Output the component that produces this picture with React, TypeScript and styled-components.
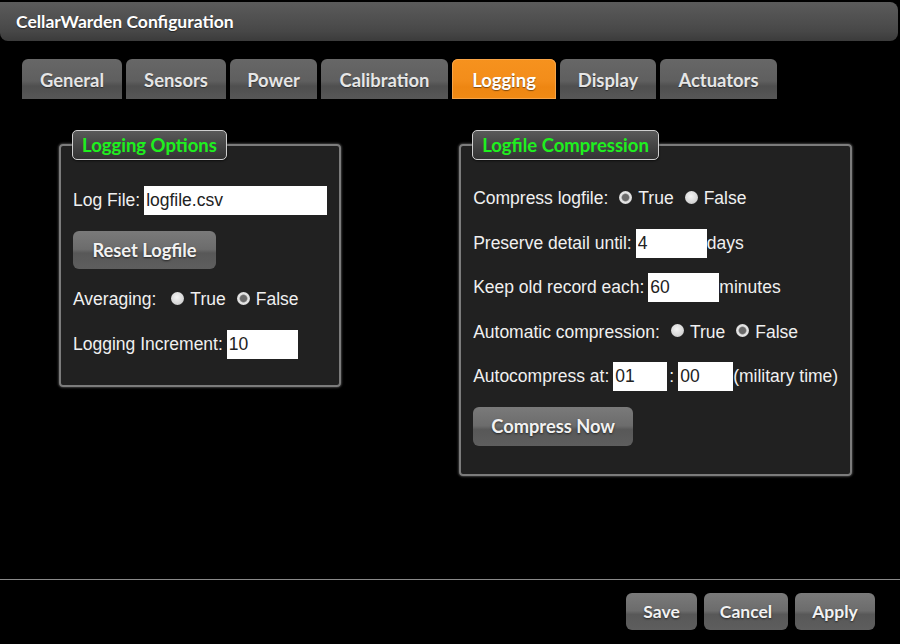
import styled, { createGlobalStyle } from 'styled-components';

const GlobalStyle = createGlobalStyle`
  html, body {
    margin: 0;
    padding: 0;
    background: #000;
  }
  body {
    font-family: "Liberation Sans", Arial, sans-serif;
    color: #f0f0f0;
  }
`;

const Page = styled.div`
  display: flex;
  flex-direction: column;
  height: 644px;
  width: 900px;
  overflow: hidden;
`;

const TitleBar = styled.div`
  margin: 2px 2px 0 0;
  height: 39px;
  display: flex;
  align-items: center;
  padding-left: 16px;
  border-radius: 0 8px 8px 8px;
  background: linear-gradient(#5b5b5b 0%, #4d4d4d 55%, #474747 75%, #3b3b3b 100%);
  font-family: Lato, "Open Sans", sans-serif;
  font-weight: 700;
  font-size: 17.5px;
  color: #fff;
  text-shadow: 0 1px 1px rgba(0, 0, 0, 0.5);
`;

const TabRow = styled.div`
  display: flex;
  gap: 4px;
  margin-top: 18px;
  padding-left: 22px;
  height: 40px;
`;

const Tab = styled.div<{ $w: number; $active?: boolean }>`
  width: ${(p) => p.$w}px;
  display: flex;
  align-items: center;
  justify-content: center;
  padding-top: 2px;
  box-sizing: border-box;
  border-radius: 6px 6px 0 0;
  font-family: Lato, "Open Sans", sans-serif;
  font-weight: 700;
  font-size: 18.4px;
  color: ${(p) => (p.$active ? '#fff' : '#e6e6e6')};
  text-shadow: 0 1px 1px rgba(0, 0, 0, 0.45);
  background: ${(p) =>
    p.$active
      ? 'linear-gradient(#f6921e 0%, #f38d1a 55%, #ee8612 70%, #f08a14 100%)'
      : 'linear-gradient(#676767 0%, #5f5f5f 55%, #4f4f4f 68%, #575757 100%)'};
  box-shadow: ${(p) => (p.$active ? 'inset 0 0 0 1px #f7a447' : 'none')};
`;

const Content = styled.div`
  flex: 1;
  display: flex;
  align-items: flex-start;
  gap: 118px;
  padding: 31px 0 0 59px;
`;

const Group = styled.fieldset<{ $w: number; $bottom: number }>`
  width: ${(p) => p.$w}px;
  box-sizing: border-box;
  margin: 0;
  padding: 0 12px ${(p) => p.$bottom}px 12px;
  border: 2px solid #7c7c7c;
  border-radius: 4px;
  background: #212121;
  box-shadow: 0 0 2px 1px rgba(170, 170, 170, 0.35);
`;

const Legend = styled.legend`
  height: 30px;
  box-sizing: border-box;
  padding: 0 9px;
  margin-left: -1px;
  display: flex;
  align-items: center;
  border: 1px solid #cfcfcf;
  border-radius: 5px;
  background: linear-gradient(#5a5a5a 0%, #454545 50%, #333 100%);
  font-family: Lato, "Open Sans", sans-serif;
  font-weight: 700;
  font-size: 18.5px;
  color: #1ef01e;
  box-shadow: 0 1px 2px rgba(0, 0, 0, 0.6);
`;

const Body = styled.div<{ $top: number; $gap: number }>`
  display: flex;
  flex-direction: column;
  align-items: flex-start;
  gap: ${(p) => p.$gap}px;
  padding-top: ${(p) => p.$top}px;
`;

const Row = styled.div`
  display: flex;
  align-items: center;
  height: 29px;
  white-space: nowrap;
  font-size: 17.5px;
  color: #f0f0f0;
`;

const Label = styled.span<{ $gap?: number }>`
  margin-right: ${(p) => (p.$gap ?? 4)}px;
`;

const Colon = styled.span`
  margin: 0 4px 0 2px;
`;

const TextInput = styled.input<{ $w: number }>`
  width: ${(p) => p.$w}px;
  height: 29px;
  box-sizing: border-box;
  border: none;
  margin: 0;
  padding: 0 2px;
  background: #fff;
  font-family: "Liberation Sans", Arial, sans-serif;
  font-size: 17.5px;
  color: #222;
  outline: none;
`;

const Radio = styled.input.attrs({ type: 'radio' })`
  appearance: none;
  width: 13px;
  height: 13px;
  margin: 0 6px 3px 0;
  border-radius: 50%;
  background: ${(p) =>
    p.checked
      ? 'radial-gradient(circle, #6a6a6a 0 3px, #8a8a8a 3.5px, #e6e6e6 4.5px, #cfcfcf 100%)'
      : 'radial-gradient(circle at 45% 40%, #f4f4f4 0%, #dadada 55%, #bdbdbd 100%)'};
`;

const Option = styled.span<{ $lead?: number }>`
  display: inline-flex;
  align-items: center;
  margin-left: ${(p) => p.$lead ?? 11}px;
`;

const Button = styled.button<{ $w: number; $h?: number; $fs?: number }>`
  width: ${(p) => p.$w}px;
  height: ${(p) => p.$h ?? 38}px;
  border: none;
  border-radius: 6px;
  padding: 0;
  background: linear-gradient(#7a7a7a 0%, #6c6c6c 48%, #585858 58%, #5e5e5e 100%);
  font-family: Lato, "Open Sans", sans-serif;
  font-weight: 700;
  font-size: ${(p) => p.$fs ?? 18.3}px;
  color: #f2f2f2;
  text-shadow: 0 1px 2px rgba(0, 0, 0, 0.6);
  cursor: pointer;
`;

const Footer = styled.div`
  border-top: 1px solid #8a8a8a;
  display: flex;
  justify-content: flex-end;
  gap: 7px;
  padding: 13px 25px 14px 0;
`;

const tabs = [
  { name: 'General', w: 100 },
  { name: 'Sensors', w: 100 },
  { name: 'Power', w: 87 },
  { name: 'Calibration', w: 127 },
  { name: 'Logging', w: 104, active: true },
  { name: 'Display', w: 96 },
  { name: 'Actuators', w: 117 },
];

const RadioPair = ({ name, value, lead }: { name: string; value: boolean; lead?: number }) => (
  <>
    <Option $lead={lead}>
      <Radio name={name} checked={value} readOnly />
      True
    </Option>
    <Option>
      <Radio name={name} checked={!value} readOnly />
      False
    </Option>
  </>
);

export default function App() {
  return (
    <Page>
      <GlobalStyle />
      <TitleBar>CellarWarden Configuration</TitleBar>
      <TabRow>
        {tabs.map((t) => (
          <Tab key={t.name} $w={t.w} $active={t.active}>
            {t.name}
          </Tab>
        ))}
      </TabRow>
      <Content>
        <Group $w={282} $bottom={26}>
          <Legend>Logging Options</Legend>
          <Body $top={26} $gap={16}>
            <Row>
              <Label>Log File:</Label>
              <TextInput $w={183} defaultValue="logfile.csv" />
            </Row>
            <Button $w={143}>Reset Logfile</Button>
            <Row>
              <Label $gap={0}>Averaging:</Label>
              <RadioPair name="avg" value={false} lead={15} />
            </Row>
            <Row>
              <Label>Logging Increment:</Label>
              <TextInput $w={71} defaultValue="10" />
            </Row>
          </Body>
        </Group>
        <Group $w={392} $bottom={28}>
          <Legend>Logfile Compression</Legend>
          <Body $top={24} $gap={15.6}>
            <Row>
              <Label $gap={0}>Compress logfile:</Label>
              <RadioPair name="cmp" value={true} lead={11} />
            </Row>
            <Row>
              <Label>Preserve detail until:</Label>
              <TextInput $w={71} defaultValue="4" />
              <span>days</span>
            </Row>
            <Row>
              <Label>Keep old record each:</Label>
              <TextInput $w={71} defaultValue="60" />
              <span>minutes</span>
            </Row>
            <Row>
              <Label $gap={0}>Automatic compression:</Label>
              <RadioPair name="auto" value={false} lead={11} />
            </Row>
            <Row>
              <Label>Autocompress at:</Label>
              <TextInput $w={54} defaultValue="01" />
              <Colon>:</Colon>
              <TextInput $w={55} defaultValue="00" />
              <span>(military time)</span>
            </Row>
            <Button $w={160} $h={39}>Compress Now</Button>
          </Body>
        </Group>
      </Content>
      <Footer>
        <Button $w={71} $h={37} $fs={17.5}>Save</Button>
        <Button $w={84} $h={37} $fs={17.5}>Cancel</Button>
        <Button $w={80} $h={37} $fs={17.5}>Apply</Button>
      </Footer>
    </Page>
  );
}
